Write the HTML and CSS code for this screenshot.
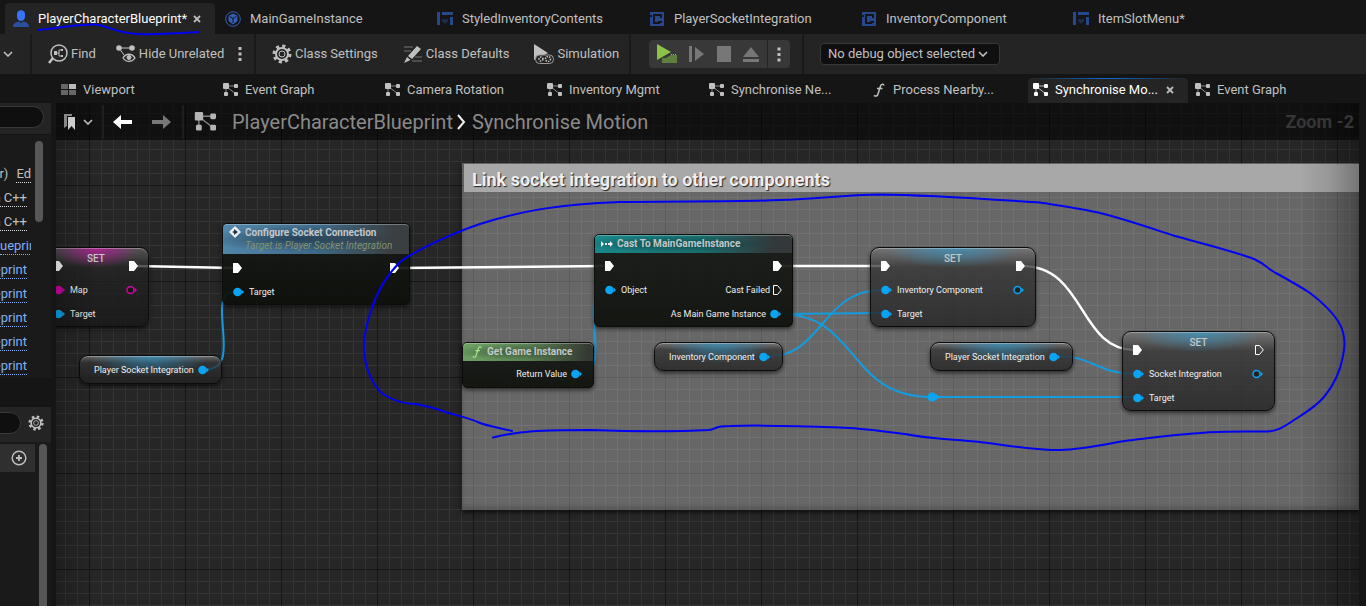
FILE: index.html
```
<!DOCTYPE html>
<html lang="en">
<head>
  <meta charset="UTF-8">
  <meta name="viewport" content="width=device-width, initial-scale=1.0">
  <title>PlayerCharacterBlueprint</title>
  <link rel="stylesheet" href="styles.css">
</head>
<body>
  <!-- shared icons -->
  <svg class="defs" width="0" height="0">
    <symbol id="graph" viewBox="0 0 16 14">
      <path d="M3 3L13 3M4 4L13 11M3 5V11" stroke="currentColor" fill="none" stroke-opacity="0.7"/>
      <rect x="0" y="0" width="6" height="6" rx="1" fill="currentColor"/>
      <rect x="11" y="1" width="4" height="4" rx="1" fill="currentColor"/>
      <rect x="1" y="9" width="4" height="4" rx="1" fill="currentColor"/>
      <rect x="11" y="9" width="4" height="4" rx="1" fill="currentColor"/>
    </symbol>
    <symbol id="widget" viewBox="0 0 16 14">
      <path d="M0 0H3V13H0ZM5 0H16V3H5ZM13 5H16V13H13Z" fill="#27478f"/>
      <path d="M8 12L5 9V7H7L8 8L9 7H11V9Z" fill="#1d2c50"/>
    </symbol>
    <symbol id="component" viewBox="0 0 14 14">
      <path d="M0 0H14V14H0Z" fill="#27478f"/>
      <path d="M11 6V3H4V11H9V9" fill="none" stroke="#151515" stroke-width="2"/>
      <path d="M0 3H2V5H0ZM9 9H12V11H9Z" fill="#151515"/>
    </symbol>
    <symbol id="chevron" viewBox="0 0 10 6">
      <path d="M1 1L5 5L9 1" fill="none" stroke="currentColor" stroke-width="1.6"/>
    </symbol>
    <symbol id="gear" viewBox="0 0 20 20">
      <circle cx="10" cy="10" r="8" fill="none" stroke="currentColor" stroke-width="3" stroke-dasharray="3.1 3.18"/>
      <circle cx="10" cy="10" r="6" fill="none" stroke="currentColor" stroke-width="2"/>
      <circle cx="10" cy="10" r="3" fill="none" stroke="currentColor" stroke-width="1"/>
    </symbol>
    <symbol id="close" viewBox="0 0 8 8">
      <path d="M1 1L7 7M7 1L1 7" stroke="currentColor" stroke-width="1.8"/>
    </symbol>
    <symbol id="dots" viewBox="0 0 4 16">
      <path d="M0.5 1H3.500V4H0.5ZM0.5 6.500H3.500V9.500H0.5ZM0.5 12H3.500V15H0.5Z" fill="currentColor"/>
    </symbol>
    <symbol id="func" viewBox="0 0 12 14">
      <path d="M11 2.500C10.500 0.600 8.300 0.600 7.500 3L5 11C4.500 13.200 2.500 13.500 1 12.300M4 5.500H9.500" fill="none" stroke="currentColor" stroke-width="1.5"/>
    </symbol>
    <symbol id="exec" viewBox="0 0 9 10">
      <path d="M0 0H5L9 5L5 10H0Z" fill="currentColor"/>
    </symbol>
    <symbol id="exec-empty" viewBox="0 0 9 10">
      <path d="M0.500 0.500H4.500L8.300 5L4.500 9.500H0.500Z" fill="none" stroke="currentColor"/>
    </symbol>
    <symbol id="pin" viewBox="0 0 12 10">
      <circle cx="4.500" cy="5" r="4.300" fill="currentColor"/>
      <path d="M8.500 2.500L11 5L8.500 7.500Z" fill="currentColor"/>
    </symbol>
    <symbol id="pin-empty" viewBox="0 0 12 10">
      <circle cx="4.500" cy="5" r="3.500" fill="#111" fill-opacity="0.6" stroke="currentColor" stroke-width="1.500"/>
      <path d="M8.500 2.500L11 5L8.500 7.500Z" fill="currentColor"/>
    </symbol>
  </svg>

  <div class="editor">
    <nav class="asset-tabs">
      <a class="asset-tab active" href="#">
        <svg width="16" height="18" viewBox="0 0 16 18"><path d="M4 4C4 -1 12 -1 12 4V7C12 9 10 11 8 11S4 9 4 7Z" fill="#3575f5"/><path d="M0 17C0 13 3 12 6 11.500L8 13L10 11.500C13 12 16 13 16 17Z" fill="#2b4f9f"/></svg>
        <span>PlayerCharacterBlueprint*</span>
        <svg class="close" width="8" height="8"><use href="#close"/></svg>
      </a>
      <a class="asset-tab" href="#">
        <svg width="16" height="16" viewBox="0 0 16 16" fill="none" stroke="#3560b8"><circle cx="8" cy="8" r="7.300"/><path d="M8 3L12 5V10L8 13L4 10V5Z" fill="#3560b8"/><path d="M4.500 5.500L8 7.500L11.500 5.500M8 7.500V12" stroke="#151515"/></svg>
        <span>MainGameInstance</span>
      </a>
      <a class="asset-tab" href="#"><svg width="16" height="14"><use href="#widget"/></svg><span>StyledInventoryContents</span></a>
      <a class="asset-tab" href="#"><svg width="16" height="14"><use href="#component"/></svg><span>PlayerSocketIntegration</span></a>
      <a class="asset-tab" href="#"><svg width="16" height="14"><use href="#component"/></svg><span>InventoryComponent</span></a>
      <a class="asset-tab" href="#"><svg width="16" height="14"><use href="#widget"/></svg><span>ItemSlotMenu*</span></a>
    </nav>

    <div class="toolbar">
      <div class="group group-first">
        <button class="tool" aria-label="More"><svg width="10" height="6"><use href="#chevron"/></svg></button>
      </div>
      <div class="group group-find">
        <button class="tool">
          <svg width="20" height="20" viewBox="0 0 20 20" fill="none" stroke="currentColor"><circle cx="11" cy="9" r="8" stroke-width="1.500"/><path d="M5 14L1 19" stroke-width="2.500"/><path d="M9 9H11V6H14M11 9V12H14"/><path d="M6 7H9V11H6ZM13 5H15V7H13ZM13 11H15V13H13Z" fill="currentColor" stroke="none"/></svg>
          Find
        </button>
        <button class="tool">
          <svg width="20" height="18" viewBox="0 0 20 18" fill="none" stroke="currentColor"><path d="M3 3H16M3 3L8 10"/><circle cx="3" cy="3" r="2.800" fill="currentColor" stroke="none"/><circle cx="16" cy="3" r="2.800" fill="currentColor" stroke="none"/><path d="M7 13C10 8 16 8 19 13C16 17.500 10 17.500 7 13Z" stroke-width="1.300"/><circle cx="13" cy="12.500" r="2" fill="currentColor"/></svg>
          Hide Unrelated
        </button>
        <button class="tool" aria-label="Hide options"><svg width="4" height="16"><use href="#dots"/></svg></button>
      </div>
      <div class="group group-class">
        <button class="tool"><svg width="20" height="20"><use href="#gear"/></svg>Class Settings</button>
        <button class="tool">
          <svg width="20" height="18" viewBox="0 0 20 18"><path d="M1 2H10M1 6H8M12 12H19M9 16H19" stroke="#777"/><path d="M14 1L18 4L9 14L5 11ZM4 12L7.500 15L1 18Z" fill="currentColor"/></svg>
          Class Defaults
        </button>
        <button class="tool">
          <svg width="20" height="20" viewBox="0 0 20 20"><path d="M0 0L14 9L0 16Z" fill="currentColor"/><rect x="1.500" y="11" width="18" height="8.500" rx="4" fill="#242424" stroke="#999"/><circle cx="7" cy="15" r="2" fill="none" stroke="currentColor" stroke-width="1.500" stroke-dasharray="1.500 1"/><circle cx="14" cy="15" r="2.500" fill="none" stroke="currentColor" stroke-width="1.500" stroke-dasharray="1.500 1"/></svg>
          Simulation
        </button>
      </div>
      <div class="group group-play">
        <div class="play-box">
          <button aria-label="Play"><svg width="20" height="20" viewBox="0 0 20 20"><path d="M0 0L14 8L0 16Z" fill="#8bc34a"/><path d="M6 14L9 14L14 11H20V19H5V14Z" fill="#5f7f3c"/><path d="M14 10.500H20" stroke="#8bc34a" stroke-dasharray="1 1"/></svg></button>
          <button aria-label="Step"><svg width="16" height="16" viewBox="0 0 16 16"><path d="M0 0H3V16H0ZM6 1L15 8L6 15Z" fill="#777"/></svg></button>
          <button aria-label="Stop"><svg width="14" height="16" viewBox="0 0 14 16"><path d="M0 0H14V16H0Z" fill="#777"/></svg></button>
          <button aria-label="Eject"><svg width="16" height="15" viewBox="0 0 16 15"><path d="M8 0L16 10H0ZM0 12H16V15H0Z" fill="#777"/></svg></button>
          <button class="play-more" aria-label="Play options"><svg width="4" height="17"><use href="#dots"/></svg></button>
        </div>
      </div>
      <div class="group group-debug">
        <button class="debug">No debug object selected<svg width="10" height="6"><use href="#chevron"/></svg></button>
      </div>
    </div>

    <nav class="doc-tabs">
      <a class="doc-tab" href="#"><svg width="16" height="12" viewBox="0 0 16 12"><path d="M0 0H7V5H0ZM0 6H7V11H0ZM8 6H15V11H8Z" fill="#666"/><path d="M8 0H15V5H8Z" fill="#bbb"/></svg><span>Viewport</span></a>
      <a class="doc-tab" href="#"><svg width="16" height="14"><use href="#graph"/></svg><span>Event Graph</span></a>
      <a class="doc-tab" href="#"><svg width="16" height="14"><use href="#graph"/></svg><span>Camera Rotation</span></a>
      <a class="doc-tab" href="#"><svg width="16" height="14"><use href="#graph"/></svg><span>Inventory Mgmt</span></a>
      <a class="doc-tab" href="#"><svg width="16" height="14"><use href="#graph"/></svg><span>Synchronise Ne...</span></a>
      <a class="doc-tab" href="#"><svg width="16" height="14"><use href="#func"/></svg><span>Process Nearby...</span></a>
      <a class="doc-tab active" href="#"><svg width="16" height="14"><use href="#graph"/></svg><span>Synchronise Mo...</span><svg class="close" width="8" height="8"><use href="#close"/></svg></a>
      <a class="doc-tab" href="#"><svg width="16" height="14"><use href="#graph"/></svg><span>Event Graph</span></a>
    </nav>

    <main class="workspace">
      <aside class="sidebar">
        <div class="search-row"><input class="search" type="text" aria-label="Search components"></div>
        <div class="tree">
          <ul class="tree-list">
            <li class="first">r) <a href="#">Ed</a></li>
            <li><a href="#">n C++</a></li>
            <li><a href="#">n C++</a></li>
            <li class="wide"><a class="blue" href="#">ueprin</a></li>
            <li><a class="blue" href="#">eprint</a></li>
            <li><a class="blue" href="#">eprint</a></li>
            <li><a class="blue" href="#">eprint</a></li>
            <li><a class="blue" href="#">eprint</a></li>
            <li><a class="blue" href="#">eprint</a></li>
          </ul>
          <div class="scrollbar"></div>
        </div>
        <div class="search-row second">
          <input class="search" type="text" aria-label="Search blueprint">
          <button class="icon-button" aria-label="Settings"><svg width="16" height="16"><use href="#gear"/></svg></button>
        </div>
        <div class="members">
          <div class="member-head">
            <button class="icon-button" aria-label="Add"><svg width="16" height="16" viewBox="0 0 16 16" fill="none" stroke="currentColor"><circle cx="8" cy="8" r="6.800" stroke-width="1.400"/><path d="M8 5V11M5 8H11" stroke-width="1.800"/></svg></button>
          </div>
          <div class="scrollbar"></div>
        </div>
      </aside>

      <section class="canvas">
        <div class="comment"><h2>Link socket integration to other components</h2></div>

        <svg class="wires" width="100%" height="100%">
          <g class="exec-wire">
            <path d="M80 163L178 165M341 165L550 163M724 163H826M966 163C1030 163 1022 247 1079 247"/>
          </g>
          <g class="data-wire">
            <path d="M151 266C188 266 148 189 178 189"/>
            <path d="M523 271C560 271 519 187 550 187"/>
            <path d="M724 211L826 210M724 211C804 211 790 294 876 294H1079"/>
            <path d="M714 253C766 253 766 187 826 187"/>
            <path d="M1004 253C1034 253 1044 271 1079 271"/>
          </g>
          <circle cx="876" cy="294" r="4.500" fill="#0aa4f2"/>
          <path d="M880 291L884 294L880 297Z" fill="#0aa4f2"/>
        </svg>

        <div class="node set pink" style="left: -13px; top: 144px; width: 106px">
          <div class="row"><svg class="exec" width="9" height="10"><use href="#exec"/></svg><h3>SET</h3><svg class="exec out" width="9" height="10"><use href="#exec"/></svg></div>
          <div class="row"><svg class="pin magenta" width="12" height="10"><use href="#pin"/></svg><span>Map</span><svg class="pin magenta out" width="12" height="10"><use href="#pin-empty"/></svg></div>
          <div class="row"><svg class="pin" width="12" height="10"><use href="#pin"/></svg><span>Target</span></div>
        </div>

        <div class="node call" style="left: 166px; top: 120px; width: 188px">
          <header class="tall">
            <svg width="12" height="12" viewBox="0 0 12 12"><path d="M6 0L12 6L6 12L0 6Z" fill="#eee"/><path d="M5 3L9 6L5 9V7L3 6L5 5Z" fill="#20394c"/></svg>
            <div><h3>Configure Socket Connection</h3><p>Target is Player Socket Integration</p></div>
          </header>
          <div class="row"><svg class="exec" width="9" height="10"><use href="#exec"/></svg><svg class="exec out" width="9" height="10"><use href="#exec"/></svg></div>
          <div class="row"><svg class="pin" width="12" height="10"><use href="#pin"/></svg><span>Target</span></div>
        </div>

        <div class="node cast" style="left: 538px; top: 131px; width: 199px">
          <header>
            <svg width="12" height="8" viewBox="0 0 12 8"><path d="M0 1L3 4L0 7ZM4 3H6V5H4ZM7 3H9V1L12 4L9 7V5H7Z" fill="#eee"/></svg>
            <h3>Cast To MainGameInstance</h3>
          </header>
          <div class="row"><svg class="exec" width="9" height="10"><use href="#exec"/></svg><svg class="exec out" width="9" height="10"><use href="#exec"/></svg></div>
          <div class="row"><svg class="pin" width="12" height="10"><use href="#pin"/></svg><span>Object</span><span class="out">Cast Failed</span><svg class="exec" width="9" height="10"><use href="#exec-empty"/></svg></div>
          <div class="row"><span class="out">As Main Game Instance</span><svg class="pin" width="12" height="10"><use href="#pin"/></svg></div>
        </div>

        <div class="node pure" style="left: 406px; top: 239px; width: 132px">
          <header>
            <svg width="12" height="12" viewBox="0 0 12 14" color="#9fe28a"><use href="#func"/></svg>
            <h3>Get Game Instance</h3>
          </header>
          <div class="row"><span class="out">Return Value</span><svg class="pin" width="12" height="10"><use href="#pin"/></svg></div>
        </div>

        <div class="node pill" style="left: 23px; top: 252px"><span>Player Socket Integration</span><svg class="pin" width="12" height="10"><use href="#pin"/></svg></div>
        <div class="node pill" style="left: 598px; top: 239px"><span>Inventory Component</span><svg class="pin" width="12" height="10"><use href="#pin"/></svg></div>
        <div class="node pill" style="left: 874px; top: 239px"><span>Player Socket Integration</span><svg class="pin" width="12" height="10"><use href="#pin"/></svg></div>

        <div class="node set" style="left: 814px; top: 144px; width: 166px">
          <div class="row"><svg class="exec" width="9" height="10"><use href="#exec"/></svg><h3>SET</h3><svg class="exec out" width="9" height="10"><use href="#exec"/></svg></div>
          <div class="row"><svg class="pin" width="12" height="10"><use href="#pin"/></svg><span>Inventory Component</span><svg class="pin out" width="12" height="10"><use href="#pin-empty"/></svg></div>
          <div class="row"><svg class="pin" width="12" height="10"><use href="#pin"/></svg><span>Target</span></div>
        </div>

        <div class="node set" style="left: 1066px; top: 228px; width: 153px">
          <div class="row"><svg class="exec" width="9" height="10"><use href="#exec"/></svg><h3>SET</h3><svg class="exec out" width="9" height="10"><use href="#exec-empty"/></svg></div>
          <div class="row"><svg class="pin" width="12" height="10"><use href="#pin"/></svg><span>Socket Integration</span><svg class="pin out" width="12" height="10"><use href="#pin-empty"/></svg></div>
          <div class="row"><svg class="pin" width="12" height="10"><use href="#pin"/></svg><span>Target</span></div>
        </div>

        <div class="vignette"></div>

        <div class="crumbs">
          <button class="crumb-button bookmark" aria-label="Bookmarks">
            <svg width="12" height="16" viewBox="0 0 12 16"><path d="M0 0H8V2H3V12L0 14Z" fill="#888"/><path d="M4 3H11V16L7.500 12L4 16Z" fill="#ccc"/></svg>
            <svg width="10" height="6"><use href="#chevron"/></svg>
          </button>
          <div class="history">
            <button class="crumb-button" aria-label="Back"><svg width="19" height="14" viewBox="0 0 19 14"><path d="M0 7L8 0V5H19V9H8V14Z" fill="#fff"/></svg></button>
            <button class="crumb-button" aria-label="Forward"><svg width="19" height="14" viewBox="0 0 19 14"><path d="M19 7L11 0V5H0V9H11V14Z" fill="#777"/></svg></button>
          </div>
          <svg class="crumb-icon" width="24" height="20" viewBox="0 0 16 14"><use href="#graph"/></svg>
          <a href="#">PlayerCharacterBlueprint</a>
          <svg class="crumb-arrow" width="9" height="16" viewBox="0 0 9 16"><path d="M1 1L7 8L1 15" fill="none" stroke="#eee" stroke-width="2"/></svg>
          <a href="#">Synchronise Motion</a>
          <strong class="zoom">Zoom -2</strong>
        </div>
      </section>
    </main>
  </div>

  <!-- pen marks drawn over the editor -->
  <svg class="pen" width="100%" height="100%">
    <path d="M38 30C60 28 78 24 95 24.500C110 26 114 33 138 34S180 33 199 32"/>
    <path d="M512 431C500 428 484 425 480 423C470 418 455 415 445 412C435 408 425 406 416 404C405 404 392 400 383 394C374 387 370 377 367 368C362 350 364 330 371 311C378 288 390 272 400 262C415 251 450 234 480 224C520 211 560 204 620 202C680 201 740 202 780 200C820 199 840 195 880 194.500C930 195 1000 200 1040 202.500C1055 205 1085 209 1100 213C1125 219 1150 228 1175 236C1200 243 1230 250 1254 259C1265 264 1267 268 1274 272C1285 278 1298 285 1310 293C1322 302 1332 312 1338 321C1345 332 1346 343 1343 356C1340 373 1334 385 1324 397C1314 409 1298 417 1288 424C1277 431 1272 431.500 1262 431.500C1240 431.500 1220 431 1200 433C1170 435 1150 438 1125 441C1100 445 1085 449 1060 450C1030 450 1000 444 980 442C950 439 930 439 905 434C880 431 860 428 840 427.500C800 426 760 425 730 426C713 426 717 429 709 430C670 432 620 431 590 430C540 430 520 431 493 437.500"/>
  </svg>
</body>
</html>
```
FILE: styles.css
```
* {
  box-sizing: border-box;
}

body {
  margin: 0;
  background: #151515;
  color: #c0c0c0;
  font-family: Roboto, "Liberation Sans", sans-serif;
  font-size: 13px;
  line-height: 16px;
  overflow: hidden;
}

h2, h3, p, ul {
  margin: 0;
  padding: 0;
}

a {
  color: inherit;
  text-decoration: none;
}

button {
  padding: 0;
  border: 0;
  background: none;
  color: inherit;
  font: inherit;
  cursor: pointer;
}

svg {
  display: block;
  flex: none;
}

.defs {
  position: absolute;
}

.editor {
  display: flex;
  flex-direction: column;
  height: 100vh;
}

/* tabs */
.asset-tabs {
  display: flex;
  flex: none;
  gap: 2px;
  height: 34px;
  padding: 3px 0 0 5px;
}

.asset-tab {
  display: flex;
  flex: none;
  align-items: center;
  width: 210px;
  padding: 0 8px;
  border-radius: 4px 4px 0 0;
  white-space: nowrap;
}

.asset-tab span {
  margin-left: 9px;
}

.asset-tab.active,
.doc-tab.active {
  background: #242424;
  color: #fff;
}

.close {
  margin-left: 6px;
  color: #bbb;
}

.doc-tabs {
  display: flex;
  flex: none;
  gap: 2px;
  height: 29px;
  padding: 4px 0 0 56px;
  overflow: hidden;
}

.doc-tab {
  display: flex;
  flex: none;
  align-items: center;
  width: 160px;
  padding: 0 5px 2px;
  border-radius: 4px 4px 0 0;
  white-space: nowrap;
}

.doc-tab span {
  margin-left: 6px;
}

.doc-tab.active {
  background: linear-gradient(to right, #242424, #0a6bd6, #242424) top / 100% 1px no-repeat #242424;
}

.doc-tab .close {
  margin-left: 8px;
}

/* toolbar */
.toolbar {
  display: flex;
  flex: none;
  height: 40px;
  background: #242424;
  white-space: nowrap;
}

.group {
  display: flex;
  align-items: center;
  flex: none;
  border-right: 2px solid #1a1a1a;
}

.group-first {
  width: 32px;
  padding-left: 3px;
}

.group-find {
  gap: 20px;
  width: 224px;
  padding-left: 16px;
}

.group-find .tool:last-child {
  margin-left: -6px;
}

.group-class {
  gap: 25px;
  width: 375px;
  padding-left: 16px;
}

.group-play {
  width: 173px;
  padding-left: 18px;
}

.group-debug {
  border: 0;
  padding-left: 16px;
}

.tool {
  display: flex;
  align-items: center;
  gap: 3px;
}

.play-box {
  display: flex;
  align-items: center;
  gap: 12px;
  height: 28px;
  padding-left: 8px;
  border-radius: 4px;
  background: #383838;
}

.play-more {
  display: flex;
  align-items: center;
  height: 28px;
  padding: 0 9px;
  border-left: 1px solid #242424;
}

.play-box .play-more {
  margin-left: -4px;
}

.debug {
  display: flex;
  align-items: center;
  gap: 3px;
  height: 22px;
  padding: 0 11px 0 7px;
  border: 1px solid #383838;
  border-radius: 4px;
  background: #0f0f0f;
}

/* left side */
.workspace {
  display: flex;
  flex: 1;
  min-height: 0;
}

.sidebar {
  display: flex;
  flex-direction: column;
  width: 51px;
  margin-right: 5px;
}

.search-row {
  display: flex;
  align-items: center;
  gap: 7px;
  height: 31px;
  padding-bottom: 3px;
  background: #242424;
  overflow: hidden;
}

.search {
  width: 56px;
  height: 22px;
  margin-left: -12px;
  border: 1px solid #383838;
  border-radius: 11px;
  background: #0f0f0f;
  color: #c0c0c0;
}

.tree {
  display: flex;
  gap: 4px;
  height: 243px;
  margin: 1px 0 29px;
  padding-top: 6px;
  background: #1a1a1a;
}

.tree-list {
  width: 31px;
  padding-top: 25px;
  overflow: hidden;
  list-style: none;
}

.tree-list li {
  display: flex;
  justify-content: flex-end;
  gap: 8px;
  height: 24px;
  padding-right: 4px;
  white-space: nowrap;
}

.tree-list .first {
  padding-right: 0;
}

.tree-list .wide {
  justify-content: flex-start;
  padding-right: 0;
}

.tree-list a {
  height: 17px;
  border-bottom: 1px dotted #ddd;
}

.tree-list .blue {
  color: #7fb0f5;
  border-color: #7fb0f5;
}

.scrollbar {
  width: 8px;
  height: 81px;
  border-radius: 4px;
  background: #575757;
}

.search-row.second {
  height: 35px;
}

.second .search {
  width: 33px;
}

.members {
  display: flex;
  flex: 1;
  align-items: flex-start;
  gap: 4px;
  padding-top: 2px;
  background: #1a1a1a;
}

.member-head {
  display: flex;
  align-items: center;
  width: 35px;
  height: 28px;
  padding-left: 11px;
  background: #2f2f2f;
}

.members .scrollbar {
  height: 100%;
  border-radius: 4px 4px 0 0;
}

/* graph */
.canvas {
  position: relative;
  flex: 1;
  margin-right: 7px;
  overflow: hidden;
  background:
    repeating-linear-gradient(to right, #161616 0 1px, transparent 1px 96px) 33px 0 / 96px 96px,
    repeating-linear-gradient(to bottom, #161616 0 1px, transparent 1px 96px) 33px 82px / 96px 96px,
    repeating-linear-gradient(to right, #343434 0 1px, transparent 1px 12px) 9px 0 / 12px 12px,
    repeating-linear-gradient(to bottom, #343434 0 1px, transparent 1px 12px) 9px 10px / 12px 12px,
    #262626;
}

.comment {
  position: absolute;
  left: 406px;
  right: 0;
  top: 60px;
  height: 347px;
  padding: 1px 0 0 2px;
  background: rgba(255, 255, 255, 0.3);
  box-shadow: 0 2px 5px rgba(0, 0, 0, 0.7), inset 0 -3px 4px rgba(0, 0, 0, 0.2);
}

.comment h2 {
  height: 28px;
  padding-left: 8px;
  background: #a8a8a8;
  color: #eee;
  font-size: 18px;
  line-height: 32px;
  text-shadow: 1px 1px 1px #222;
  white-space: nowrap;
}

.wires {
  position: absolute;
  left: 0;
  top: 0;
}

.exec-wire {
  fill: none;
  stroke: #fff;
  stroke-width: 2.5px;
}

.data-wire {
  fill: none;
  stroke: #149cdf;
  stroke-width: 2px;
}

.node {
  position: absolute;
  border: 1px solid #0c0c0c;
  border-radius: 5px;
  background: linear-gradient(rgba(24, 26, 23, 0.92), rgba(12, 15, 10, 0.92));
  box-shadow: 0 2px 4px rgba(0, 0, 0, 0.6);
  color: #f0f0f0;
  font-size: 9px;
  line-height: 12px;
  white-space: nowrap;
}

.node h3 {
  color: #c4c8c8;
  font-size: 10px;
  line-height: 14px;
}

.node header {
  display: flex;
  align-items: center;
  gap: 4px;
  height: 18px;
  margin-bottom: 1px;
  padding: 0 6px;
  border-radius: 4px 4px 0 0;
  box-shadow: inset 0 1px 0 rgba(255, 255, 255, 0.3);
}

.node header.tall {
  align-items: flex-start;
  gap: 4px;
  height: 30px;
  margin-bottom: 2px;
  padding-top: 2px;
}

.node header p {
  color: #83936e;
  font-size: 10px;
  font-style: italic;
}

.call header {
  background: radial-gradient(ellipse at 40% 50%, rgba(20, 35, 50, 0.6), transparent 60%), linear-gradient(100deg, #5288ac, #3f6a88 50%, #3a3f42 90%);
}

.cast header {
  background: radial-gradient(ellipse at 40% 50%, rgba(10, 50, 50, 0.6), transparent 60%), linear-gradient(100deg, #19888a, #1b6b6c 55%, #33383a 90%);
}

.pure {
  padding-bottom: 1px;
}

.pure header {
  padding-left: 8px;
  background: radial-gradient(ellipse at 40% 50%, rgba(30, 50, 30, 0.5), transparent 60%), linear-gradient(100deg, #6fa265, #5a8153 50%, #343a32 95%);
}

.row {
  display: flex;
  align-items: center;
  height: 24px;
  padding: 0 10px;
}

.pin {
  color: #0aa4f2;
}

.pin.magenta {
  color: #d400a8;
}

.exec {
  color: #fff;
}

.row .out {
  margin-left: auto;
}

.row .pin + span {
  margin-left: 4px;
}

.row .out + .exec {
  margin-left: 3px;
}

.row .out + .pin {
  margin-left: 4px;
}

.set,
.pill {
  border-radius: 9px;
  background:
    radial-gradient(ellipse 42% 20px at 50% 0, rgba(50, 150, 200, 0.7), transparent),
    linear-gradient(rgba(150, 150, 150, 0.6), rgba(60, 60, 60, 0.5) 25%, rgba(30, 30, 30, 0.5)),
    rgba(38, 38, 38, 0.55);
  box-shadow: 0 2px 4px rgba(0, 0, 0, 0.6), inset 0 1px 0 rgba(255, 255, 255, 0.3);
}

.set {
  padding-top: 6px;
}

.set.pink {
  background:
    radial-gradient(ellipse 42% 20px at 50% 0, rgba(190, 20, 160, 0.8), transparent),
    linear-gradient(rgba(120, 120, 120, 0.6), rgba(40, 40, 40, 0.5) 25%, rgba(20, 20, 20, 0.5)),
    rgba(30, 30, 30, 0.55);
}

.set h3 {
  flex: 1;
  align-self: flex-start;
  line-height: 9px;
  text-align: center;
  font-weight: 500;
}

.pill {
  display: flex;
  align-items: center;
  gap: 4px;
  height: 29px;
  padding: 0 11px 0 14px;
}

.vignette {
  position: absolute;
  inset: 0;
  background:
    linear-gradient(to right, rgba(0, 0, 0, 0.2), transparent 40px),
    linear-gradient(to left, rgba(0, 0, 0, 0.3), rgba(0, 0, 0, 0.1) 30px, transparent 60px);
  pointer-events: none;
}

.crumbs {
  position: absolute;
  inset: 0 0 auto;
  display: flex;
  align-items: center;
  height: 37px;
  background: rgba(0, 0, 0, 0.58);
  color: #8a8a8a;
  font-size: 20px;
  line-height: 24px;
  white-space: nowrap;
}

.crumb-button {
  display: flex;
  align-items: center;
}

.bookmark {
  gap: 7px;
  width: 46px;
  padding-left: 8px;
  color: #c0c0c0;
}

.history {
  display: flex;
  align-items: center;
  gap: 20px;
  height: 34px;
  width: 82px;
  padding-left: 9px;
  border: 2px solid #1e1e1e;
  border-width: 0 2px;
}

.crumb-icon {
  margin: 0 14px 0 10px;
  color: #b5b5b5;
}

.crumb-arrow {
  margin: 0 6px 0 4px;
}

.zoom {
  margin-left: auto;
  padding-right: 5px;
  color: #363636;
  font-size: 18px;
}

.pen {
  position: absolute;
  left: 0;
  top: 0;
  fill: none;
  stroke: #0000f5;
  stroke-width: 2px;
  stroke-linecap: round;
  stroke-linejoin: round;
  pointer-events: none;
}
```
